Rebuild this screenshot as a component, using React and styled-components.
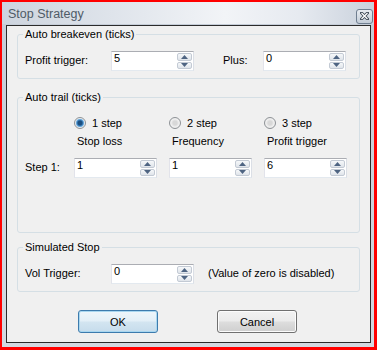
import styled, { createGlobalStyle } from 'styled-components';

const GlobalStyle = createGlobalStyle`
  html, body { margin: 0; padding: 0; background: #fff; }
  body {
    font-family: "Liberation Sans", Arial, sans-serif;
    font-size: 11px;
    color: #000;
  }
`;

const Shot = styled.div`
  width: 377px;
  height: 350px;
  box-sizing: border-box;
  border: solid #ff0000;
  border-width: 2px 3px 3px 2px;
  background: linear-gradient(#c4ccd7, #d3d9e1);
  display: flex;
  flex-direction: column;
`;

const TitleBar = styled.div`
  height: 22px;
  display: flex;
  align-items: center;
  justify-content: space-between;
  padding: 0 1px 0 6px;
  background: linear-gradient(to right, #cdd4de 0%, #dfe4eb 30%, #f2f4f7 60%, #e6eaf0 80%, #c9d1dc 100%);
`;

const Title = styled.span`
  font-size: 12.5px;
  color: #4f5b67;
  margin-top: 2px;
`;

const CloseBtn = styled.span`
  width: 17px;
  height: 15px;
  box-sizing: border-box;
  margin-top: 6px;
  border: 1px solid #6f7e90;
  border-radius: 3px;
  background: linear-gradient(#e8ecf1, #c3ccd7);
  display: flex;
  align-items: center;
  justify-content: center;
`;

const Client = styled.div`
  flex: 1;
  margin: 1px 3px 4px 4px;
  border: 1px solid #2b2b2b;
  background: #f0f0f0;
  padding: 2px 10px 0;
  display: flex;
  flex-direction: column;
`;

const Group = styled.fieldset`
  margin: 0 0 ${p => p.$gap}px;
  padding: ${p => p.$pt}px 7px ${p => p.$pb}px;
  border: 1px solid #d5dfe5;
  border-radius: 3px;
  min-width: 0;
`;

const Legend = styled.legend`
  padding: 0 2px;
  margin-left: -2px;
  line-height: 13px;
`;

const Row = styled.div`
  display: flex;
  align-items: flex-start;
`;

const Label = styled.span`
  width: ${p => p.$w}px;
  flex: none;
  padding-top: 3px;
  line-height: 13px;
  margin-left: ${p => p.$ml || 0}px;
`;

const Note = styled.span`
  padding-top: 3px;
  line-height: 13px;
  margin-left: 14px;
`;

const SpinBox = styled.div`
  width: 83px;
  height: 20px;
  box-sizing: border-box;
  flex: none;
  display: flex;
  background: #fff;
  border: 1px solid;
  border-color: #abadb3 #dbdfe6 #e3e9ef #e2e3ea;
`;

const SpinValue = styled.span`
  flex: 1;
  padding-left: 2px;
  line-height: 13px;
`;

const SpinButtons = styled.div`
  width: 15px;
  display: flex;
  flex-direction: column;
  gap: 1px;
  padding: 1px 1px 1px 0;
`;

const SpinBtn = styled.span`
  flex: 1;
  border: 1px solid #c3cad4;
  border-radius: 2px;
  background: linear-gradient(#f6f8fa, #dfe4ea);
  display: flex;
  align-items: center;
  justify-content: center;
`;

const TrailGrid = styled.div`
  display: grid;
  grid-template-columns: 49px repeat(3, 95px);
  grid-template-rows: 14px 18px 30px;
  padding-top: 12px;
`;

const RadioItem = styled.label`
  display: flex;
  align-items: center;
  gap: 6px;
  line-height: 14px;
`;

const RadioDot = styled.span`
  width: 12px;
  height: 12px;
  box-sizing: border-box;
  border-radius: 50%;
  border: 1px solid #8e9296;
  background: ${p => p.$on
    ? 'radial-gradient(circle, #1b4f80 0 2px, #3f83bf 3px, #8dc2ea 4px, #f2f2f2 4.6px, #e0e0e0 100%)'
    : 'radial-gradient(circle, #d8d8d8 0 2px, #f0f0f0 4px, #e6e6e6 100%)'};
`;

const Caption = styled.span`
  grid-row: 2;
  grid-column: ${p => p.$col};
  align-self: end;
  padding-left: 3px;
  line-height: 13px;
`;

const StepLabel = styled.span`
  grid-row: 3;
  align-self: end;
  padding-bottom: 4px;
  line-height: 13px;
`;

const InputCell = styled.div`
  grid-row: 3;
  align-self: end;
`;

const Buttons = styled.div`
  display: flex;
  justify-content: center;
  gap: 59px;
  margin-top: 18px;
  padding-right: 2px;
`;

const Button = styled.button`
  width: 80px;
  height: 23px;
  font: inherit;
  color: #000;
  border-radius: 3px;
  border: 1px solid ${p => (p.$primary ? '#3d7bad' : '#707070')};
  background: ${p => (p.$primary
    ? 'linear-gradient(#eef6fb 0%, #e3eff7 48%, #d3e5f1 52%, #c6dcec 100%)'
    : 'linear-gradient(#f2f2f2 0%, #ebebeb 48%, #dddddd 52%, #cfcfcf 100%)')};
  box-shadow: inset 0 0 0 1px ${p => (p.$primary ? '#a9d7f0' : '#fcfcfc')};
  padding: 0;
`;

const Arrow = ({ down }) => (
  <svg width="7" height="4" viewBox="0 0 7 4">
    <path d={down ? 'M0 0h7L3.5 4z' : 'M0 4h7L3.5 0z'} fill="#4e6482" />
  </svg>
);

const Spinner = ({ value }) => (
  <SpinBox>
    <SpinValue>{value}</SpinValue>
    <SpinButtons>
      <SpinBtn><Arrow /></SpinBtn>
      <SpinBtn><Arrow down /></SpinBtn>
    </SpinButtons>
  </SpinBox>
);

export default function App() {
  return (
    <>
      <GlobalStyle />
      <Shot>
        <TitleBar>
          <Title>Stop Strategy</Title>
          <CloseBtn>
            <svg width="9" height="8" viewBox="0 0 9 8">
              <path d="M1.5 1l6 6M7.5 1l-6 6" stroke="#3b4654" strokeWidth="3" strokeLinecap="square" />
              <path d="M1.5 1l6 6M7.5 1l-6 6" stroke="#ffffff" strokeWidth="1.3" />
            </svg>
          </CloseBtn>
        </TitleBar>
        <Client>
          <Group $pt={10} $pb={7} $gap={12}>
            <Legend>Auto breakeven (ticks)</Legend>
            <Row>
              <Label $w={86}>Profit trigger:</Label>
              <Spinner value="5" />
              <Label $w={40} $ml={29}>Plus:</Label>
              <Spinner value="0" />
            </Row>
          </Group>
          <Group $pt={0} $pb={54} $gap={8}>
            <Legend>Auto trail (ticks)</Legend>
            <TrailGrid>
              <span />
              <RadioItem><RadioDot $on />1 step</RadioItem>
              <RadioItem><RadioDot />2 step</RadioItem>
              <RadioItem><RadioDot />3 step</RadioItem>
              <Caption $col={2}>Stop loss</Caption>
              <Caption $col={3}>Frequency</Caption>
              <Caption $col={4}>Profit trigger</Caption>
              <StepLabel>Step 1:</StepLabel>
              <InputCell><Spinner value="1" /></InputCell>
              <InputCell><Spinner value="1" /></InputCell>
              <InputCell><Spinner value="6" /></InputCell>
            </TrailGrid>
          </Group>
          <Group $pt={10} $pb={7} $gap={0}>
            <Legend>Simulated Stop</Legend>
            <Row>
              <Label $w={86}>Vol Trigger:</Label>
              <Spinner value="0" />
              <Note>(Value of zero is disabled)</Note>
            </Row>
          </Group>
          <Buttons>
            <Button $primary>OK</Button>
            <Button>Cancel</Button>
          </Buttons>
        </Client>
      </Shot>
    </>
  );
}
